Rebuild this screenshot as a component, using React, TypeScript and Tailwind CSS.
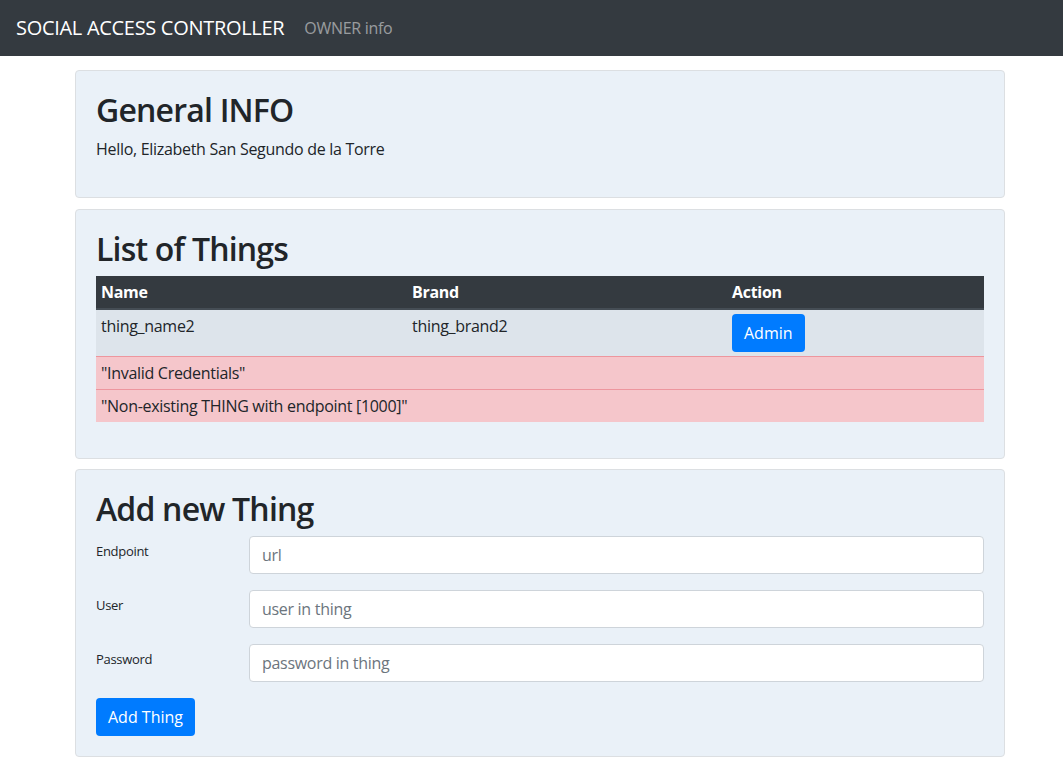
export default function App() {
  const font = { fontFamily: '"Open Sans", "Noto Sans", Arial, sans-serif' }
  return (
    <div className="min-h-screen bg-white text-[#212529] text-base leading-6 tracking-[-0.3px]" style={font}>
      {/* navbar */}
      <nav className="h-14 bg-[#343a40] px-4 flex items-center">
        <span className="text-xl leading-[30px] text-white mr-5">SOCIAL ACCESS CONTROLLER</span>
        <span className="text-base text-white/50">OWNER info</span>
      </nav>

      <div className="w-[930px] ml-[75px] pt-[14px] pb-4 flex flex-col gap-[11px]">
        {/* general info */}
        <section className="bg-[#eaf1f8] border border-[#dcdfe2] rounded p-5">
          <h2 className="text-[32px] leading-[38px] font-semibold tracking-[-0.8px] mb-2">General INFO</h2>
          <p className="mb-4">Hello, Elizabeth San Segundo de la Torre</p>
        </section>

        {/* list of things */}
        <section className="bg-[#eaf1f8] border border-[#dcdfe2] rounded p-5">
          <h2 className="text-[32px] leading-[38px] font-semibold tracking-[-0.8px] mb-2">List of Things</h2>
          <table className="w-full mb-4 border-collapse">
            <thead>
              <tr className="bg-[#343a40] text-white border-b-2 border-[#454d55]">
                <th className="w-[311px] text-left font-bold px-[5px] py-1">Name</th>
                <th className="w-[320px] text-left font-bold px-[5px] py-1">Brand</th>
                <th className="text-left font-bold px-[5px] py-1">Action</th>
              </tr>
            </thead>
            <tbody>
              <tr className="bg-[#dde4eb] align-top">
                <td className="px-[5px] py-1">thing_name2</td>
                <td className="px-[5px] py-1">thing_brand2</td>
                <td className="px-[5px] py-1">
                  <button className="bg-[#007bff] text-white rounded px-3 h-[38px] leading-6 tracking-normal">Admin</button>
                </td>
              </tr>
              <tr className="bg-[#f5c6cb] border-t border-[#ed969e]">
                <td colSpan={3} className="px-[5px] py-1">"Invalid Credentials"</td>
              </tr>
              <tr className="bg-[#f5c6cb] border-t border-[#ed969e]">
                <td colSpan={3} className="px-[5px] py-1">"Non-existing THING with endpoint [1000]"</td>
              </tr>
            </tbody>
          </table>
        </section>

        {/* add new thing */}
        <section className="bg-[#eaf1f8] border border-[#dcdfe2] rounded p-5 -mt-px">
          <h2 className="text-[32px] leading-[38px] font-semibold tracking-[-0.8px] mb-2">Add new Thing</h2>
          <form className="flex flex-col gap-4">
            {[
              ["Endpoint", "url"],
              ["User", "user in thing"],
              ["Password", "password in thing"],
            ].map(([label, ph]) => (
              <div key={label} className="flex">
                <label className="w-[153px] text-[13px] leading-[21px] pt-[5px]">{label}</label>
                <input
                  className="flex-1 h-[38px] bg-white border border-[#ced4da] rounded px-3 text-base placeholder:text-[#6c757d]"
                  placeholder={ph}
                />
              </div>
            ))}
            <div>
              <button type="button" className="bg-[#007bff] text-white rounded px-3 h-[38px] leading-6 tracking-normal">Add Thing</button>
            </div>
          </form>
        </section>
      </div>
    </div>
  )
}
